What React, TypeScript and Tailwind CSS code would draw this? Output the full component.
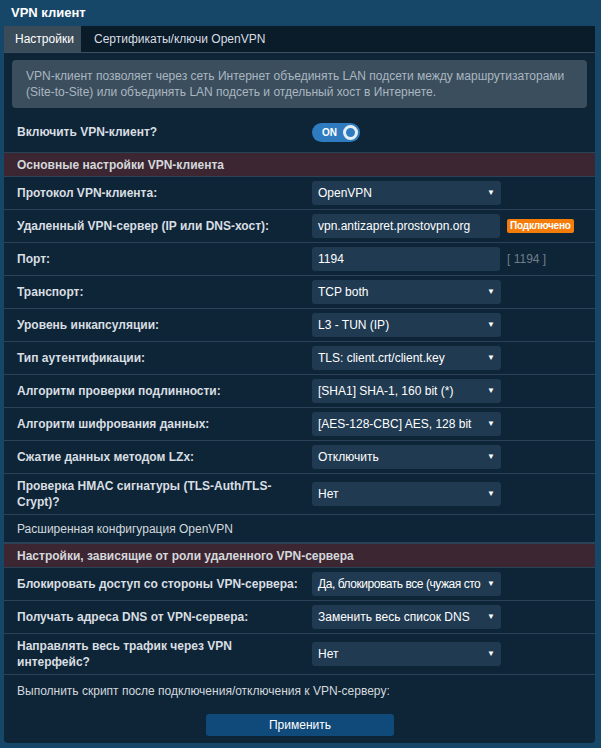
import React from "react";

type Row =
  | { kind: "select"; label: string[]; value: string; tight?: boolean }
  | { kind: "input"; label: string[]; value: string; extra?: "badge" | "hint" }
  | { kind: "text"; label: string[] };

const mainRows: Row[] = [
  { kind: "select", label: ["Протокол VPN-клиента:"], value: "OpenVPN" },
  { kind: "input", label: ["Удаленный VPN-сервер (IP или DNS-хост):"], value: "vpn.antizapret.prostovpn.org", extra: "badge" },
  { kind: "input", label: ["Порт:"], value: "1194", extra: "hint" },
  { kind: "select", label: ["Транспорт:"], value: "TCP both" },
  { kind: "select", label: ["Уровень инкапсуляции:"], value: "L3 - TUN (IP)" },
  { kind: "select", label: ["Тип аутентификации:"], value: "TLS: client.crt/client.key" },
  { kind: "select", label: ["Алгоритм проверки подлинности:"], value: "[SHA1] SHA-1, 160 bit (*)" },
  { kind: "select", label: ["Алгоритм шифрования данных:"], value: "[AES-128-CBC] AES, 128 bit" },
  { kind: "select", label: ["Сжатие данных методом LZx:"], value: "Отключить" },
  { kind: "select", label: ["Проверка HMAC сигнатуры (TLS-Auth/TLS-", "Crypt)?"], value: "Нет" },
];

const roleRows: Row[] = [
  { kind: "select", label: ["Блокировать доступ со стороны VPN-сервера:"], value: "Да, блокировать все (чужая сто", tight: true },
  { kind: "select", label: ["Получать адреса DNS от VPN-сервера:"], value: "Заменить весь список DNS" },
  { kind: "select", label: ["Направлять весь трафик через VPN", "интерфейс?"], value: "Нет" },
];

const Select = ({ value, tight }: { value: string; tight?: boolean }) => (
  <div className="w-[189px] h-[24px] rounded-[3px] bg-[#1f3a51] flex items-center justify-between pl-[6px] pr-[6px] text-white text-[12px]">
    <span className={`whitespace-nowrap ${tight ? "tracking-[-0.45px]" : ""}`}>{value}</span>
    <span className="text-[8px] text-white">▼</span>
  </div>
);

const Input = ({ value }: { value: string }) => (
  <div className="w-[188px] h-[24px] rounded-[3px] bg-[#1f3a51] flex items-center pl-[6px] text-white text-[12px]">
    {value}
  </div>
);

const Label = ({ lines, bold = true }: { lines: string[]; bold?: boolean }) => (
  <div
    className={`w-[295px] text-[12px] leading-[16px] whitespace-nowrap ${
      bold ? "font-bold text-[#d9dee2]" : "text-[#d3d9de]"
    }`}
  >
    {lines.map((l, i) => (
      <div key={i}>{l}</div>
    ))}
  </div>
);

const FormRow = ({ row }: { row: Row }) => {
  if (row.kind === "text") {
    return (
      <div className="h-[28px] flex items-center pl-[13px] border-b border-[#2a4356]">
        <Label lines={row.label} bold={false} />
      </div>
    );
  }
  const twoLine = row.label.length > 1;
  return (
    <div
      className={`flex items-center pl-[13px] border-b border-[#2a4356] ${
        twoLine ? "h-[41px]" : "h-[33px]"
      }`}
    >
      <Label lines={row.label} />
      {row.kind === "select" ? (
        <Select value={row.value} tight={row.tight} />
      ) : (
        <div className="flex items-center">
          <Input value={row.value} />
          {row.extra === "badge" && (
            <span className="ml-[7px] px-[3px] h-[14px] leading-[14px] rounded-[2px] bg-[#f47c0b] text-white text-[10px] font-bold tracking-[-0.2px]">
              Подключено
            </span>
          )}
          {row.extra === "hint" && (
            <span className="ml-[7px] text-[12px] text-[#6e7e8b]">[ 1194 ]</span>
          )}
        </div>
      )}
    </div>
  );
};

const SectionHeader = ({ title }: { title: string }) => (
  <div className="h-[25px] flex items-center pl-[13px] bg-[#3c2631] border-y border-[#2a4356] text-[12px] font-bold text-[#d4d8dc]">
    {title}
  </div>
);

export default function App() {
  return (
    <div
      className="w-[601px] h-[748px] bg-[#164769] pl-[4px] pr-[6px] flex flex-col"
      style={{ fontFamily: '"Liberation Sans", Arial, sans-serif' }}
    >
      {/* Page title */}
      <div className="h-[26px] flex items-center pl-[7px] text-[13px] font-bold text-white">
        VPN клиент
      </div>

      <div className="flex-1 mb-[5px] bg-[#0e2537] rounded-b-[4px] flex flex-col">
        {/* Tabs */}
        <div className="h-[27px] bg-[#0a1b29] border-b border-[#3c5062] flex items-stretch text-[12px]">
          <div className="w-[77px] bg-[#3a4c59] text-white flex items-center pl-[11px]">
            Настройки
          </div>
          <div className="text-[#d8dee3] flex items-center pl-[13px]">
            Сертификаты/ключи OpenVPN
          </div>
        </div>

        {/* Info box */}
        <div className="px-[8px] pt-[7px]">
          <div className="rounded-[4px] bg-[#3b4e5d] px-[14px] py-[8px] text-[12px] leading-[16px] text-[#aab6c0]">
            VPN-клиент позволяет через сеть Интернет объединять LAN подсети между маршрутизаторами
            (Site-to-Site) или объединять LAN подсеть и отдельный хост в Интернете.
          </div>
        </div>

        {/* Enable toggle */}
        <div className="h-[44px] flex items-center pl-[13px] pt-[4px]">
          <div className="w-[295px] text-[12px] font-bold text-[#d9dee2]">Включить VPN-клиент?</div>
          <div className="w-[48px] h-[19px] rounded-full bg-[#2e7cbf] flex items-center justify-between pl-[10px] pr-[2px]">
            <span className="text-[10px] font-bold text-white">ON</span>
            <span className="w-[15px] h-[15px] rounded-full border-[3px] border-[#e6eef5] bg-[#2e7cbf]" />
          </div>
        </div>

        <SectionHeader title="Основные настройки VPN-клиента" />
        {mainRows.map((r) => (
          <FormRow key={r.label.join(" ")} row={r} />
        ))}
        <FormRow row={{ kind: "text", label: ["Расширенная конфигурация OpenVPN"] }} />

        <SectionHeader title="Настройки, зависящие от роли удаленного VPN-сервера" />
        {roleRows.map((r) => (
          <FormRow key={r.label.join(" ")} row={r} />
        ))}

        <div className="h-[31px] flex items-center pl-[13px] text-[12px] text-[#d3d9de]">
          Выполнить скрипт после подключения/отключения к VPN-серверу:
        </div>

        <div className="flex justify-center pt-[8px] pl-[1px]">
          <button className="w-[188px] h-[22px] rounded-[3px] bg-[#0f4a7a] text-white text-[12px]">
            Применить
          </button>
        </div>
      </div>
    </div>
  );
}
